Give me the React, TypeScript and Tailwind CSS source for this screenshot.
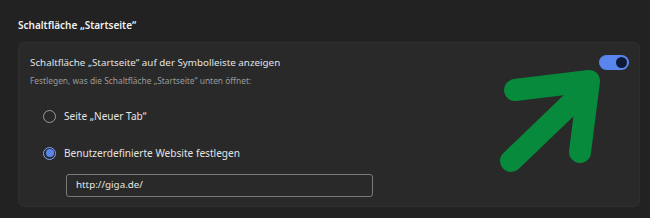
export default function App() {
  return (
    <div
      className="relative h-[218px] w-[650px] overflow-hidden bg-[#222222] text-[#e3e3e3]"
      style={{ fontFamily: '"Noto Sans", "Open Sans", sans-serif' }}
    >
      <div className="pl-[18px] pr-[10px] pt-[18px]">
        <h2 className="text-[10px] font-semibold leading-[14px] text-[#f1f1f1]">Schaltfläche „Startseite“</h2>
        <div className="mt-[10px] h-[165px] rounded-[6px] border border-[#2f2f2f] bg-[#292929] pl-[11px] pr-[10px]">
          <div className="flex items-start justify-between pt-[12px]">
            <div>
              <div className="text-[9.8px] leading-[16px] text-[#e3e3e3]">
                Schaltfläche „Startseite“ auf der Symbolleiste anzeigen
              </div>
              <div className="mt-[3px] text-[8.4px] leading-[13px] text-[#9b9b9b]">
                Festlegen, was die Schaltfläche „Startseite“ unten öffnet:
              </div>
            </div>
            <button className="flex h-[15px] w-[30px] items-center justify-end rounded-full bg-[#5a85ec] pr-[2px]">
              <span className="h-[11px] w-[11px] rounded-full bg-[#0e1a35]" />
            </button>
          </div>
          <div className="mt-[21px] flex h-[16px] items-center gap-[8px] pl-[13px]">
            <span className="h-[13px] w-[13px] rounded-full border-[1.5px] border-[#9a9a9a]" />
            <span className="text-[10.1px] leading-[16px]">Seite „Neuer Tab“</span>
          </div>
          <div className="mt-[21px] flex h-[16px] items-center gap-[8px] pl-[13px]">
            <span className="flex h-[13px] w-[13px] items-center justify-center rounded-full border-[1.5px] border-[#7fa2f5]">
              <span className="h-[8px] w-[8px] rounded-full bg-[#5a85ec]" />
            </span>
            <span className="text-[10.1px] leading-[16px]">Benutzerdefinierte Website festlegen</span>
          </div>
          <div className="ml-[36px] mt-[13px] flex h-[23px] w-[307px] items-center rounded-[3px] border border-[#7a7a7a] px-[9px] text-[9.8px] text-[#e6e6e6]">
            http://giga.de/
          </div>
        </div>
      </div>
      <svg className="pointer-events-none absolute left-0 top-0" width="650" height="218" viewBox="0 0 650 218">
        <g stroke="#078a3b" strokeWidth="22" strokeLinecap="round" strokeLinejoin="round" fill="none">
          <path d="M511 161 L586 89" />
          <path d="M515 90 L589 81 L580 152" />
        </g>
      </svg>
    </div>
  );
}
